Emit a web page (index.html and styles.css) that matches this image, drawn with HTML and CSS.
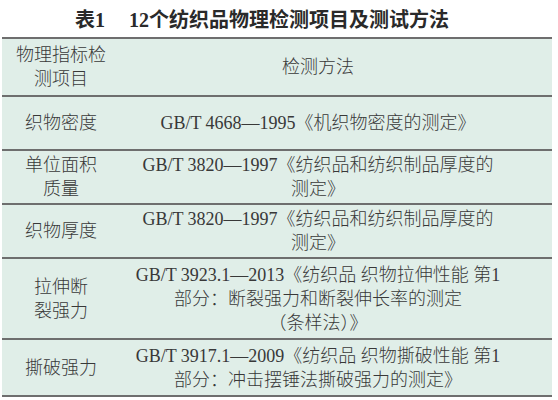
FILE: index.html
```html
<!DOCTYPE html>
<html lang="zh">
<head>
<meta charset="utf-8">
<link rel="stylesheet" href="styles.css">
</head>
<body>
<div class="title">表1<span class="gap"></span>12个纺织品物理检测项目及测试方法</div>
<div class="table">
  <div class="row r-head">
    <div class="c1">物理指标检<br>测项目</div>
    <div class="c2">检测方法</div>
  </div>
  <div class="row r-short">
    <div class="c1">织物密度</div>
    <div class="c2">GB/T 4668—1995《机织物密度的测定》</div>
  </div>
  <div class="row r-short">
    <div class="c1">单位面积<br>质量</div>
    <div class="c2">GB/T 3820—1997《纺织品和纺织制品厚度的<br>测定》</div>
  </div>
  <div class="row r-short">
    <div class="c1">织物厚度</div>
    <div class="c2">GB/T 3820—1997《纺织品和纺织制品厚度的<br>测定》</div>
  </div>
  <div class="row r-tall">
    <div class="c1">拉伸断<br>裂强力</div>
    <div class="c2">GB/T 3923.1—2013《纺织品 织物拉伸性能 第1<br>部分：断裂强力和断裂伸长率的测定<br>（条样法）》</div>
  </div>
  <div class="row r-last">
    <div class="c1">撕破强力</div>
    <div class="c2">GB/T 3917.1—2009《纺织品 织物撕破性能 第1<br>部分：冲击摆锤法撕破强力的测定》</div>
  </div>
</div>
</body>
</html>
```
FILE: styles.css
```css
html, body {
  margin: 0;
  padding: 0;
  background: #ffffff;
}
body {
  width: 558px;
  height: 400px;
  overflow: hidden;
  font-family: "Liberation Serif", "Noto Sans CJK SC", serif;
  color: #383838;
}
.title {
  height: 37px;
  box-sizing: border-box;
  padding: 4px 34px 0 0;
  line-height: 33px;
  font-size: 20px;
  font-weight: bold;
  text-align: center;
  color: #2a2a2a;
}
.gap {
  display: inline-block;
  width: 24px;
}
.table {
  margin-left: 2px;
  width: 550px;
  background: #e0eee8;
  border-top: 2px solid #6e6e6e;
}
.row {
  display: grid;
  grid-template-columns: 118px 1fr;
  border-bottom: 2px solid #6e6e6e;
  font-size: 18px;
  line-height: 24px;
  font-weight: 300;
}
.r-head { height: 56px; }
.r-short { height: 52px; }
.r-tall { height: 79px; }
.r-last { height: 55px; }
.c1, .c2 {
  display: flex;
  align-items: center;
  justify-content: center;
  text-align: center;
}
.c2 {
  padding-right: 36px;
}
```
